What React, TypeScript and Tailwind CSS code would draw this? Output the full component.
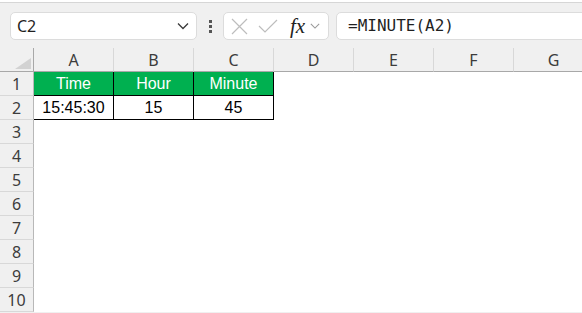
import React from "react";

const COLS = ["A", "B", "C", "D", "E", "F", "G"];

type Cell = { text: string; kind: "head" | "data" | "empty" };

const rows: Cell[][] = [
  [
    { text: "Time", kind: "head" },
    { text: "Hour", kind: "head" },
    { text: "Minute", kind: "head" },
  ],
  [
    { text: "15:45:30", kind: "data" },
    { text: "15", kind: "data" },
    { text: "45", kind: "data" },
  ],
];

function Chevron({ className }: { className?: string }) {
  return (
    <svg width="12" height="8" viewBox="0 0 12 8" className={className}>
      <path d="M1 1.5 L6 6.5 L11 1.5" fill="none" stroke="currentColor" strokeWidth="1.3" />
    </svg>
  );
}

export default function App() {
  return (
    <div
      className="w-[582px] h-[313px] overflow-hidden bg-[#f0f0f0] relative"
      style={{ fontFamily: '"Noto Sans", "Liberation Sans", sans-serif' }}
    >
      <div className="h-[3px] bg-white border-b border-[#d6d6d6]" />
      {/* toolbar */}
      <div className="flex items-center h-[28px] mt-[9px] pl-[10px]">
        <div className="w-[187px] shrink-0 h-[28px] bg-white border border-[#dcdcdc] rounded-[5px] flex items-center justify-between pl-[6px] pr-[7px]">
          <span className="text-[16px] text-[#1f1f1f] leading-none">C2</span>
          <Chevron className="text-[#3a3a3a]" />
        </div>
        <div className="w-[26px] shrink-0 flex flex-col items-center gap-[2px]">
          <div className="w-[3px] h-[3px] bg-[#555]" />
          <div className="w-[3px] h-[3px] bg-[#555]" />
          <div className="w-[3px] h-[3px] bg-[#555]" />
        </div>
        <div className="w-[106px] shrink-0 h-[28px] bg-white border border-[#dcdcdc] rounded-[5px] flex items-center pl-[7px]">
          <svg width="17" height="17" viewBox="0 0 17 17" className="shrink-0">
            <path d="M1 1 L16 16 M16 1 L1 16" stroke="#bdbdbd" strokeWidth="1.2" fill="none" />
          </svg>
          <svg width="20" height="14" viewBox="0 0 20 14" className="ml-[10px] shrink-0">
            <path d="M1 7 L7 13 L19 1" stroke="#bdbdbd" strokeWidth="1.2" fill="none" />
          </svg>
          <span
            className="ml-[12px] text-[21px] italic text-[#222] leading-none"
            style={{ fontFamily: '"Liberation Serif", "DejaVu Serif", serif' }}
          >
            fx
          </span>
          <Chevron className="ml-[5px] text-[#9a9a9a] w-[10px] shrink-0" />
        </div>
        <div className="ml-[7px] w-[300px] shrink-0 h-[28px] bg-white border border-[#dcdcdc] rounded-l-[5px] flex items-center pl-[11px]">
          <span
            className="text-[16px] text-[#1f1f1f] leading-none"
            style={{ fontFamily: '"DejaVu Sans Mono", "Liberation Mono", monospace' }}
          >
            =MINUTE(A2)
          </span>
        </div>
      </div>
      {/* grid */}
      <div className="mt-[8px]">
        {/* column headers */}
        <div className="flex h-[24px]">
          <div className="w-[34px] shrink-0 border-r border-b border-[#a8a8a8] relative">
            <svg width="16" height="11" viewBox="0 0 16 11" className="absolute left-[15px] top-[10px]">
              <path d="M16 0 L16 11 L0 11 Z" fill="#d2d2d2" />
            </svg>
          </div>
          {COLS.map((c) => (
            <div
              key={c}
              className="w-[80px] shrink-0 border-b border-[#a8a8a8] border-r border-r-[#d8d8d8] flex items-center justify-center text-[16px] text-[#3c3c3c]"
            >
              {c}
            </div>
          ))}
        </div>
        {Array.from({ length: 10 }).map((_, r) => (
          <div key={r} className="flex h-[24px]">
            <div className="w-[34px] shrink-0 border-r border-[#b8b8b8] border-b border-b-[#d8d8d8] flex items-center justify-center text-[16px] text-[#3c3c3c]">
              {r + 1}
            </div>
            {COLS.map((c, ci) => {
              const cell = rows[r]?.[ci];
              if (!cell) {
                return <div key={c} className="w-[80px] shrink-0 bg-white" />;
              }
              const head = cell.kind === "head";
              return (
                <div
                  key={c}
                  className={
                    "w-[80px] shrink-0 border-r border-b border-black flex items-center justify-center text-[16px] " +
                    (head ? "bg-[#00b050] text-white" : "bg-white text-black")
                  }
                  style={{ fontFamily: '"Liberation Sans", Arial, sans-serif' }}
                >
                  {cell.text}
                </div>
              );
            })}
          </div>
        ))}
      </div>
    </div>
  );
}
